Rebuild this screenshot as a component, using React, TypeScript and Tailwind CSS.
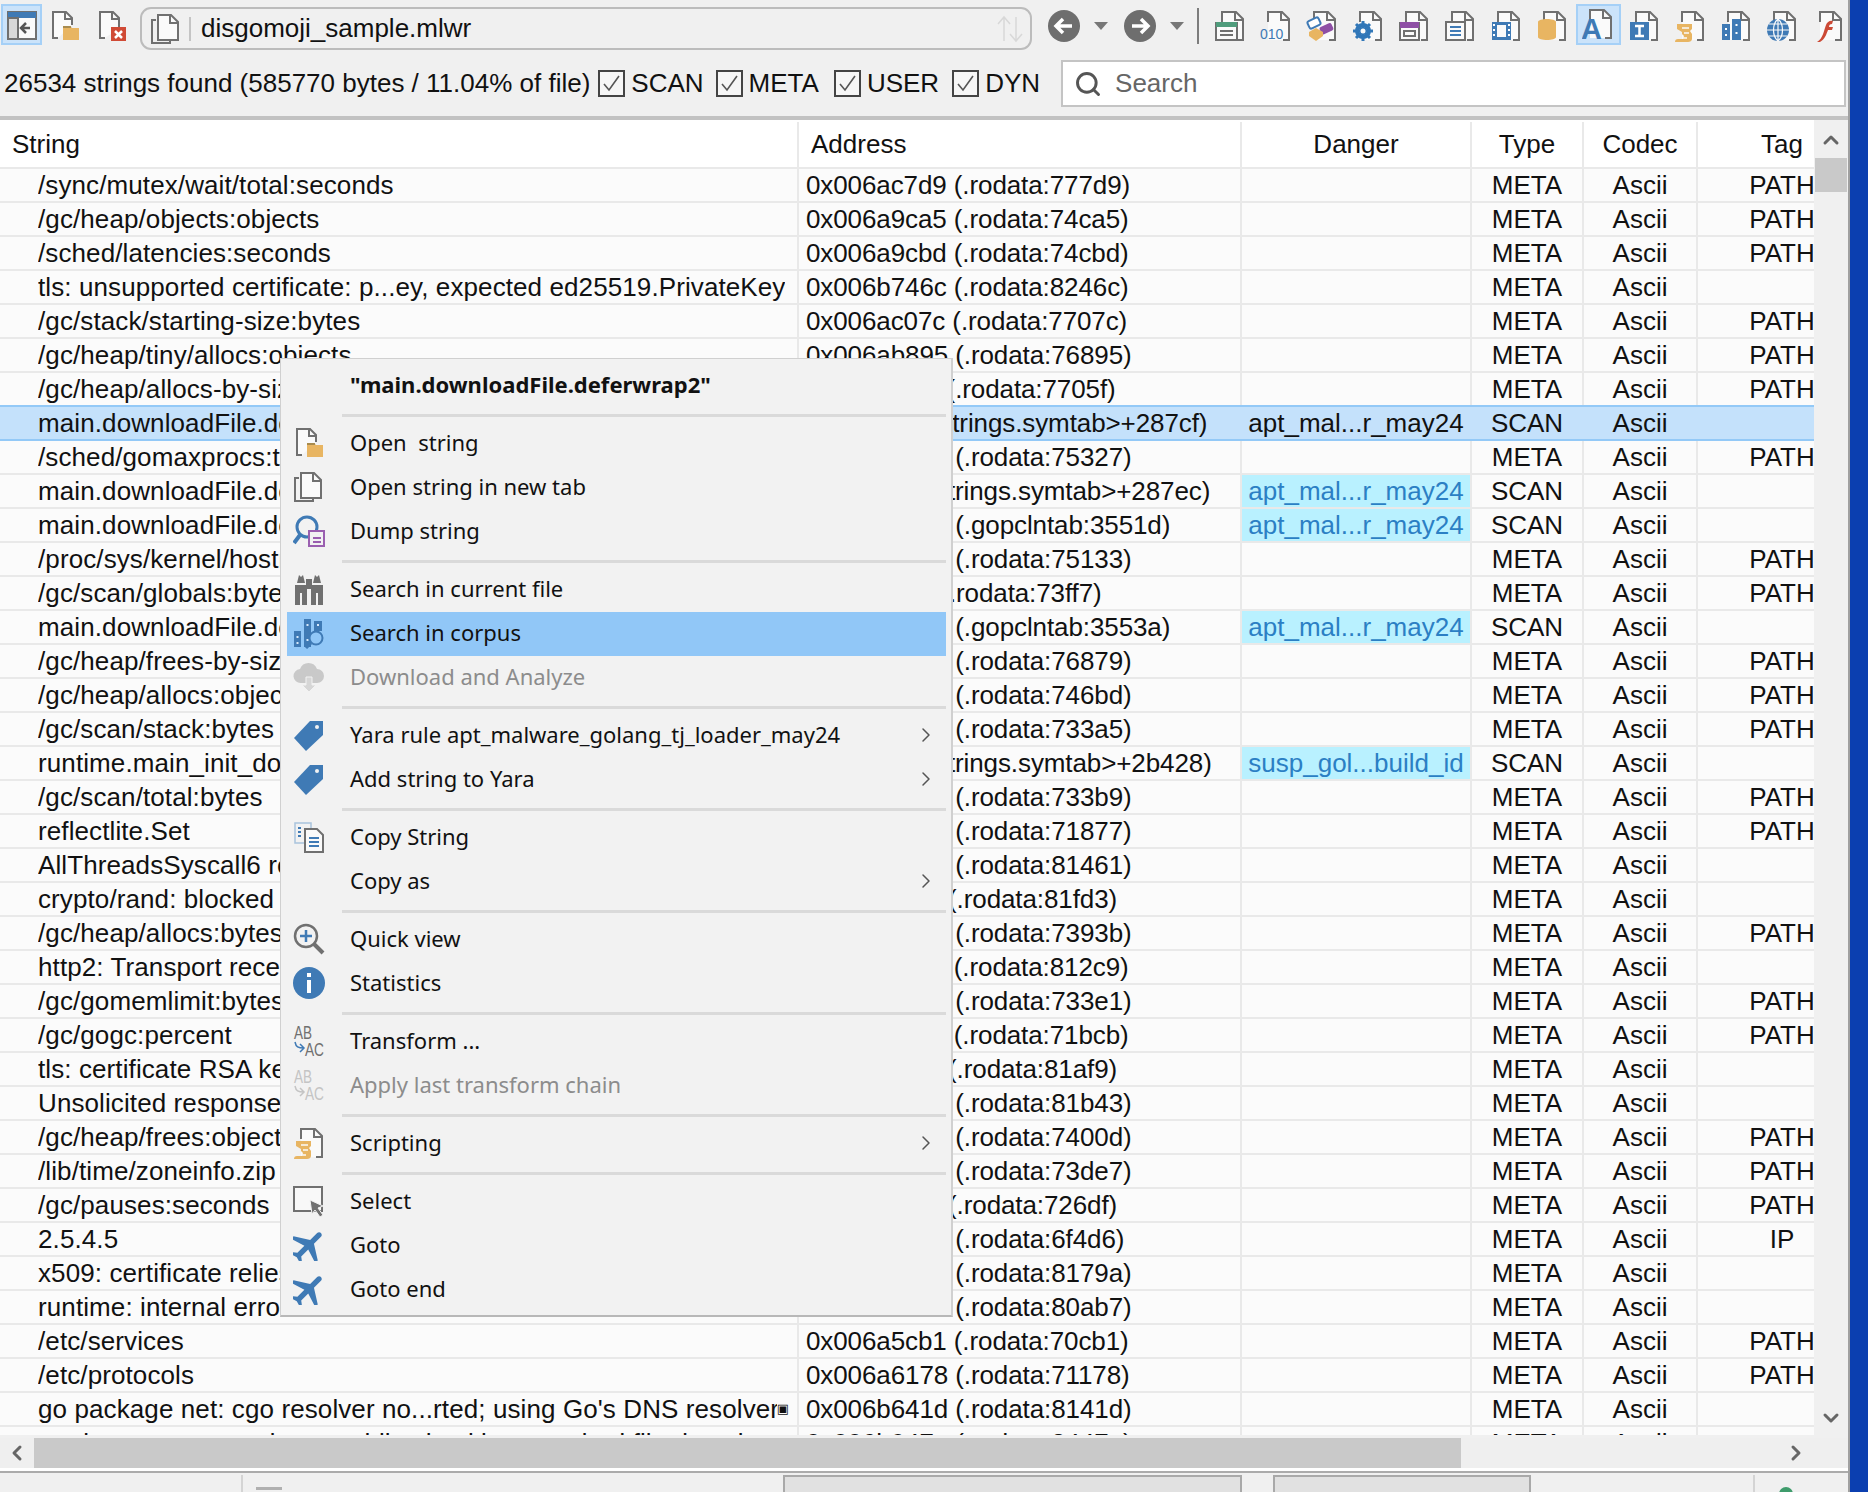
import type { ReactNode } from 'react';
import { ChevronLeft, ChevronRight, ChevronUp, ChevronDown, Search } from 'lucide-react';

const BLUE = '#3f7ab5';
const GOLD = '#e8b562';
const GRAY = '#707070';

type Row = {
  s: string;
  a: string;
  d?: string;
  hl?: boolean;
  t?: string;
  tag?: string;
  sel?: boolean;
  mark?: boolean;
};

// every .rodata offset sits at the same distance from its address
function ro(off: string) {
  const hex = (parseInt(off, 16) + 0x635000).toString(16);
  return `0x00${hex} (.rodata:${off})`;
}

function meta(s: string, off: string, tag?: string): Row {
  return { s, a: ro(off), t: 'META', tag };
}

const rows: Row[] = [
  meta('/sync/mutex/wait/total:seconds', '777d9', 'PATH'),
  meta('/gc/heap/objects:objects', '74ca5', 'PATH'),
  meta('/sched/latencies:seconds', '74cbd', 'PATH'),
  meta('tls: unsupported certificate: p...ey, expected ed25519.PrivateKey', '8246c'),
  meta('/gc/stack/starting-size:bytes', '7707c', 'PATH'),
  meta('/gc/heap/tiny/allocs:objects', '76895', 'PATH'),
  meta('/gc/heap/allocs-by-size:bytes', '7705f', 'PATH'),
  { s: 'main.downloadFile.deferwrap2', a: '0x0087cc (.strings.symtab>+287cf)', d: 'apt_mal...r_may24', t: 'SCAN', sel: true },
  meta('/sched/gomaxprocs:threads', '75327', 'PATH'),
  { s: 'main.downloadFile.deferwrap1', a: '0x0087ef (.strings.symtab>+287ec)', d: 'apt_mal...r_may24', hl: true, t: 'SCAN' },
  { s: 'main.downloadFile.deferwrap2', a: '0x0043551d (.gopclntab:3551d)', d: 'apt_mal...r_may24', hl: true, t: 'SCAN' },
  meta('/proc/sys/kernel/hostname', '75133', 'PATH'),
  meta('/gc/scan/globals:bytes', '73ff7', 'PATH'),
  { s: 'main.downloadFile.deferwrap1', a: '0x0043553a (.gopclntab:3553a)', d: 'apt_mal...r_may24', hl: true, t: 'SCAN' },
  meta('/gc/heap/frees-by-size:bytes', '76879', 'PATH'),
  meta('/gc/heap/allocs:objects', '746bd', 'PATH'),
  meta('/gc/scan/stack:bytes', '733a5', 'PATH'),
  { s: 'runtime.main_init_done', a: '0x00b42f (.strings.symtab>+2b428)', d: 'susp_gol...build_id', hl: true, t: 'SCAN' },
  meta('/gc/scan/total:bytes', '733b9', 'PATH'),
  meta('reflectlite.Set', '71877', 'PATH'),
  meta('AllThreadsSyscall6 returned', '81461'),
  meta('crypto/rand: blocked for', '81fd3'),
  meta('/gc/heap/allocs:bytes', '7393b', 'PATH'),
  meta('http2: Transport received', '812c9'),
  meta('/gc/gomemlimit:bytes', '733e1', 'PATH'),
  meta('/gc/gogc:percent', '71bcb', 'PATH'),
  meta('tls: certificate RSA key', '81af9'),
  meta('Unsolicited response received', '81b43'),
  meta('/gc/heap/frees:objects', '7400d', 'PATH'),
  meta('/lib/time/zoneinfo.zip', '73de7', 'PATH'),
  meta('/gc/pauses:seconds', '726df', 'PATH'),
  meta('2.5.4.5', '6f4d6', 'IP'),
  meta('x509: certificate relies on', '8179a'),
  meta('runtime: internal error', '80ab7'),
  meta('/etc/services', '70cb1', 'PATH'),
  meta('/etc/protocols', '71178', 'PATH'),
  { ...meta("go package net: cgo resolver no...rted; using Go's DNS resolver", '8141d'), mark: true },
  meta('runtime: unexpected error while checking standard file descriptors', '8447a'),
];

function Icon({ children, className = '' }: { children: ReactNode; className?: string }) {
  return (
    <svg viewBox="0 0 32 32" className={`w-8 h-8 shrink-0 ${className}`}>
      {children}
    </svg>
  );
}

// page outline shared by most toolbar icons
function Page({ children }: { children?: ReactNode }) {
  return (
    <Icon>
      <path d="M8 12V2h14l7 7v21h-6" fill="#fafafa" stroke={GRAY} strokeWidth="2" />
      <path d="M8 12v18h15V10h6" fill="#fafafa" />
      <path d="M21 2v8h8" fill="none" stroke={GRAY} strokeWidth="2" />
      <path d="M23 30h6" stroke={GRAY} strokeWidth="2" />
      {children}
    </Icon>
  );
}

function OpenIcon() {
  return (
    <Icon>
      <path d="M9 28H4V2h13l6 6v7" fill="#fafafa" stroke={GRAY} strokeWidth="2" />
      <path d="M16 2v7h7" fill="none" stroke={GRAY} strokeWidth="2" />
      <path d="M14 16h7l2 2h7v12H14z" fill={GOLD} />
      <path d="M14 16h8v2h-8z" fill="#a88b4e" />
    </Icon>
  );
}

function CloseIcon() {
  return (
    <Icon>
      <path d="M9 28H4V2h13l6 6v10" fill="#fafafa" stroke={GRAY} strokeWidth="2" />
      <path d="M16 2v7h7" fill="none" stroke={GRAY} strokeWidth="2" />
      <rect x="15" y="17" width="15" height="14" fill="#d04a35" />
      <path d="M19 21l7 7M26 21l-7 7" stroke="#fff" strokeWidth="2.5" />
    </Icon>
  );
}

function TabsIcon() {
  return (
    <Icon>
      <path d="M6 7H2v23h18v-3" fill="none" stroke={GRAY} strokeWidth="2" />
      <path d="M8 2h13l7 7v18H8z" fill="#fafafa" stroke={GRAY} strokeWidth="2" />
      <path d="M20 2v8h8" fill="none" stroke={GRAY} strokeWidth="2" />
    </Icon>
  );
}

function PanelIcon() {
  return (
    <Icon>
      <rect x="2" y="3" width="28" height="27" fill="#fafafa" stroke={GRAY} strokeWidth="2" />
      <rect x="2" y="3" width="28" height="6" fill={BLUE} />
      <rect x="2" y="9" width="10" height="21" fill="#d8d8d8" stroke={GRAY} strokeWidth="2" />
      <path d="M24 19H15M20 14l-5 5 5 5" fill="none" stroke="#555" strokeWidth="2.5" />
    </Icon>
  );
}

function PlaneIcon() {
  return (
    <Icon>
      <g transform="rotate(45 16 16) translate(-4.7 -4.5) scale(1.8)">
        <path
          d="M21 16v-2l-8-5V3.5c0-.83-.67-1.5-1.5-1.5S10 2.67 10 3.5V9l-8 5v2l8-2.5V19l-2 1.5V22l3.5-1 3.5 1v-1.5L13 19v-5.5l8 2.5z"
          fill={BLUE}
        />
      </g>
    </Icon>
  );
}

function TagIcon() {
  return (
    <Icon>
      <path d="M30 2v14L13 32 1 19 17 2z" fill={BLUE} />
      <circle cx="24" cy="8" r="2" fill="#f2f2f2" />
    </Icon>
  );
}

function AbIcon({ faded }: { faded?: boolean }) {
  const c = faded ? '#c4c4c4' : GRAY;
  const arrow = faded ? '#c4c4c4' : BLUE;
  return (
    <Icon>
      <text x="1" y="14" fontSize="18" fontFamily="Liberation Sans, sans-serif" textLength="18" lengthAdjust="spacingAndGlyphs" fill={c}>
        AB
      </text>
      <path d="M2 17c1 5 3 6 9 6M7 19l4 4-4 4" fill="none" stroke={arrow} strokeWidth="1.5" />
      <text x="12" y="31" fontSize="18" fontFamily="Liberation Sans, sans-serif" textLength="19" lengthAdjust="spacingAndGlyphs" fill={c}>
        AC
      </text>
    </Icon>
  );
}

function ScrollIcon() {
  return (
    <>
      <path d="M3 14h15v5l-2 2 2 3v5c0 2-2 3-4 3H1c0-2 1-3 3-3h5l1-3-2-2v-2l-5-3z" fill={GOLD} />
      <path d="M8 18h7M10 23h5M8 28h5" stroke="#fafafa" strokeWidth="1.5" />
    </>
  );
}

const menuIcons: Record<string, ReactNode> = {
  open: <OpenIcon />,
  tabs: <TabsIcon />,
  dump: (
    <Icon>
      <circle cx="14" cy="12" r="10" fill="none" stroke={BLUE} strokeWidth="3" />
      <path d="M7 20L1 28" stroke={BLUE} strokeWidth="4" />
      <rect x="16" y="16" width="15" height="15" fill="#f2f2f2" stroke="#9a5fb0" strokeWidth="2" />
      <path d="M20 23h8M20 27h8" stroke="#9a5fb0" strokeWidth="2" />
    </Icon>
  ),
  binoc: (
    <Icon>
      <path d="M4 10l2-8 2 2 2-2 2 8zM20 10l2-8 2 2 2-2 2 8z" fill={GRAY} />
      <path d="M2 12h12v20H9V20H7v12H2zM18 12h12v20h-5V20h-2v12h-5z" fill={GRAY} />
      <rect x="13" y="6" width="6" height="10" fill={GRAY} />
    </Icon>
  ),
  corpus: (
    <Icon>
      <rect x="1" y="14" width="7" height="16" fill={BLUE} />
      <rect x="11" y="2" width="7" height="28" fill={BLUE} />
      <rect x="21" y="4" width="8" height="10" fill={BLUE} />
      <path d="M4.5 19v2M4.5 25v2M14.5 7v2M14.5 22v2M25 7v2" stroke="#d6e8fa" strokeWidth="2" />
      <circle cx="23" cy="21" r="6.5" fill="#91c7f7" stroke={BLUE} strokeWidth="2" />
      <path d="M18 26l-5 5" stroke={BLUE} strokeWidth="3" />
    </Icon>
  ),
  cloud: (
    <Icon>
      <path d="M8 22a7 7 0 0 1-1-14 9 9 0 0 1 17 0 7 7 0 0 1 0 14z" fill="#c9c9c9" />
      <path d="M13 16h6v8h4l-7 7-7-7h4z" fill="#d6d6d6" stroke="#f2f2f2" strokeWidth="1" />
    </Icon>
  ),
  tag: <TagIcon />,
  copy: (
    <Icon>
      <path d="M2 2h16v20H2z" fill="#f2f2f2" stroke="#a9c4dd" strokeWidth="1.5" />
      <path d="M5 7h3M5 11h3M5 15h3" stroke={BLUE} strokeWidth="2" />
      <path d="M12 8h12l6 6v17H12z" fill="#fafafa" stroke={GRAY} strokeWidth="2" />
      <path d="M16 17h10M16 21h10M16 25h10" stroke={BLUE} strokeWidth="2" />
    </Icon>
  ),
  quick: (
    <Icon>
      <circle cx="13" cy="13" r="11" fill="none" stroke={GRAY} strokeWidth="2.5" />
      <path d="M21 21l9 9" stroke={GRAY} strokeWidth="4" />
      <path d="M13 7v12M7 13h12" stroke={BLUE} strokeWidth="2.5" />
    </Icon>
  ),
  info: (
    <Icon>
      <circle cx="16" cy="16" r="16" fill={BLUE} />
      <rect x="14" y="13" width="4" height="13" fill="#fff" />
      <rect x="14" y="6" width="4" height="4" fill="#fff" />
    </Icon>
  ),
  ab: <AbIcon />,
  abFaded: <AbIcon faded />,
  script: (
    <Page>
      <ScrollIcon />
    </Page>
  ),
  select: (
    <Icon>
      <rect x="1" y="2" width="28" height="24" fill="#f8f8f8" stroke={GRAY} strokeWidth="2" />
      <path d="M17 15l13 6-5 2 5 7-3 2-5-7-3 4z" fill={GRAY} stroke="#f2f2f2" strokeWidth="1" />
    </Icon>
  ),
  plane: <PlaneIcon />,
};

type MenuEntry =
  | 'sep'
  | { label: string; icon?: string; bold?: boolean; off?: boolean; sub?: boolean; active?: boolean };

const menu: MenuEntry[] = [
  { label: '"main.downloadFile.deferwrap2"', bold: true },
  'sep',
  { label: 'Open  string', icon: 'open' },
  { label: 'Open string in new tab', icon: 'tabs' },
  { label: 'Dump string', icon: 'dump' },
  'sep',
  { label: 'Search in current file', icon: 'binoc' },
  { label: 'Search in corpus', icon: 'corpus', active: true },
  { label: 'Download and Analyze', icon: 'cloud', off: true },
  'sep',
  { label: 'Yara rule apt_malware_golang_tj_loader_may24', icon: 'tag', sub: true },
  { label: 'Add string to Yara', icon: 'tag', sub: true },
  'sep',
  { label: 'Copy String', icon: 'copy' },
  { label: 'Copy as', sub: true },
  'sep',
  { label: 'Quick view', icon: 'quick' },
  { label: 'Statistics', icon: 'info' },
  'sep',
  { label: 'Transform ...', icon: 'ab' },
  { label: 'Apply last transform chain', icon: 'abFaded', off: true },
  'sep',
  { label: 'Scripting', icon: 'script', sub: true },
  'sep',
  { label: 'Select', icon: 'select' },
  { label: 'Goto', icon: 'plane' },
  { label: 'Goto end', icon: 'plane' },
];

function ContextMenu() {
  return (
    <div className="absolute left-[280px] top-[358px] w-[673px] h-[959px] pt-[5px] pl-[6px] pr-[5px] bg-[#f2f2f2] border border-[#d0d0d0] border-b-2 border-b-[#b8b8b8] border-r-2 font-['Noto_Sans',sans-serif] text-[22px] text-[#111]">
      {menu.map((m, i) =>
        m === 'sep' ? (
          <div key={i} className="h-[14px] ml-[55px] flex items-center">
            <div className="h-[3px] w-full bg-[#dadada]" />
          </div>
        ) : (
          <div key={i} className={`h-[44px] pb-[3px] flex items-center ${m.active ? 'bg-[#91c7f7]' : ''}`}>
            <div className="w-[63px] pl-[6px] shrink-0">{m.icon ? menuIcons[m.icon] : null}</div>
            <span className={`flex-1 whitespace-pre ${m.bold ? 'font-bold' : ''} ${m.off ? 'text-[#8c8c8c]' : ''}`}>
              {m.label}
            </span>
            {m.sub ? <ChevronRight className="w-6 h-6 mr-[8px] text-[#555]" strokeWidth={1.5} /> : null}
          </div>
        )
      )}
    </div>
  );
}

function Check({ label, className = '' }: { label: string; className?: string }) {
  return (
    <div className={`flex items-center shrink-0 ${className}`}>
      <svg viewBox="0 0 27 27" className="w-[27px] h-[27px] shrink-0">
        <rect x="1" y="1" width="25" height="25" fill="#f6f6f6" stroke="#444" strokeWidth="2" />
        <path d="M6 14l5 6L21 6" fill="none" stroke="#555" strokeWidth="1.6" />
      </svg>
      <span className="ml-[6px]">{label}</span>
    </div>
  );
}

function NavButton({ dir }: { dir: 'back' | 'fwd' }) {
  return (
    <>
      <svg viewBox="0 0 32 32" className="w-8 h-8 shrink-0">
        <circle cx="16" cy="16" r="16" fill="#6e6e6e" />
        {dir === 'back' ? (
          <path d="M24 16H9M15 9l-7 7 7 7" fill="none" stroke="#fff" strokeWidth="3.5" />
        ) : (
          <path d="M8 16h15M17 9l7 7-7 7" fill="none" stroke="#fff" strokeWidth="3.5" />
        )}
      </svg>
      <svg viewBox="0 0 14 8" className="w-[14px] h-2 ml-[14px] mr-[16px] shrink-0">
        <path d="M0 0h14L7 8z" fill="#777" />
      </svg>
    </>
  );
}

function Toolbar() {
  return (
    <div className="h-[58px] flex items-start pt-[4px]">
      <div className="ml-[1px] w-[41px] h-[41px] bg-[#cbe3fa] border-2 border-[#a5d0f7] flex items-center justify-center">
        <PanelIcon />
      </div>
      <div className="ml-[7px] w-8 mt-[6px]">
        <OpenIcon />
      </div>
      <div className="ml-[15px] w-8 mt-[6px]">
        <CloseIcon />
      </div>
      <div className="ml-[12px] mt-[3px] w-[892px] h-[43px] rounded-[11px] border-2 border-[#bcbcbc] flex items-center pl-[8px]">
        <TabsIcon />
        <div className="ml-[7px] w-[2px] h-[24px] bg-[#c4c4c4]" />
        <span className="ml-[10px]">disgomoji_sample.mlwr</span>
        <svg viewBox="0 0 32 32" className="w-8 h-8 ml-auto mr-[4px]">
          <path d="M10 28V5M4 11l6-7 6 7M22 4v24M16 21l6 7 6-7" fill="none" stroke="#d8d8d8" strokeWidth="1.5" />
        </svg>
      </div>
      <div className="ml-[16px] mt-[6px] flex items-center h-8">
        <NavButton dir="back" />
        <NavButton dir="fwd" />
        <div className="w-[2px] h-[36px] bg-[#7d7d7d] mr-[15px] -ml-[3px]" />
        <div className="flex items-center gap-[14px]">
          <Page>
            <rect x="2" y="13" width="21" height="17" fill="#fafafa" stroke={GRAY} strokeWidth="2" />
            <rect x="2" y="12" width="21" height="5" fill="#4f9c7c" />
            <path d="M6 21h13M6 25h13" stroke={GRAY} strokeWidth="2" />
          </Page>
          <Page>
            <text x="0" y="29" fontSize="14" fontFamily="Liberation Sans, sans-serif" fill={BLUE}>
              010
            </text>
          </Page>
          <Page>
            <rect x="2" y="9" width="12" height="8" rx="2" transform="rotate(-25 8 13)" fill="#fff" stroke={BLUE} strokeWidth="2" />
            <rect x="14" y="15" width="13" height="8" rx="2" transform="rotate(-25 20 19)" fill="#8e4fa5" />
            <path d="M3 22l7-4 7 4v4l-7 5-7-5z" fill={GOLD} />
          </Page>
          <Page>
            <circle cx="11" cy="21" r="6" fill="none" stroke="#3177b8" strokeWidth="4" />
            <path d="M11 11v20M1 21h20M4 14l14 14M18 14L4 28" stroke="#3177b8" strokeWidth="3" />
            <circle cx="11" cy="21" r="2.5" fill="#fafafa" />
          </Page>
          <Page>
            <rect x="2" y="13" width="19" height="17" fill="#fafafa" stroke={GRAY} strokeWidth="2" />
            <rect x="2" y="12" width="19" height="6" fill="#8e4fa5" />
            <rect x="6" y="21" width="11" height="5" fill="none" stroke={GRAY} strokeWidth="2" />
          </Page>
          <Page>
            <rect x="2" y="12" width="19" height="18" fill="#fafafa" stroke={GRAY} strokeWidth="2" />
            <path d="M6 17h11M6 21h11M6 25h11" stroke={BLUE} strokeWidth="2" />
          </Page>
          <Page>
            <rect x="2" y="12" width="19" height="18" fill={BLUE} />
            <rect x="7" y="15" width="9" height="12" fill="#fafafa" />
            <path d="M4 14v2M4 19v2M4 24v2M19 14v2M19 19v2M19 24v2" stroke="#fff" strokeWidth="2" />
          </Page>
          <Page>
            <path d="M2 12c0-4 18-4 18 0v15c0 4-18 4-18 0z" fill={GOLD} />
          </Page>
          <div className="w-[45px] h-[41px] -mx-[6.5px] -mt-[4px] flex items-center justify-center bg-[#cbe3fa] border-2 border-[#a5d0f7]">
            <Page>
              <text x="-1" y="31" fontSize="29" fontFamily="Liberation Sans, sans-serif" fontWeight="700" fill={BLUE}>
                A
              </text>
            </Page>
          </div>
          <Page>
            <rect x="2" y="12" width="19" height="18" fill={BLUE} />
            <path d="M7 16h9M7 26h9M11.5 16v10" stroke="#fff" strokeWidth="2.5" />
          </Page>
          <Page>
            <ScrollIcon />
          </Page>
          <Page>
            <rect x="2" y="14" width="8" height="16" fill={BLUE} />
            <rect x="12" y="9" width="9" height="21" fill={BLUE} />
            <path d="M6 18v2M6 24v2M16.5 14v2M16.5 22v2" stroke="#fff" strokeWidth="2" />
          </Page>
          <Page>
            <circle cx="12" cy="20" r="11" fill={BLUE} />
            <path d="M1 20h22M12 9v22M3 14h18M3 26h18M12 9c-6 5-6 17 0 22M12 9c6 5 6 17 0 22" fill="none" stroke="#fafafa" strokeWidth="1.2" />
          </Page>
          <Page>
            <path d="M5 32c6-3 7-12 9-17 1-3 4-5 7-4l-1 3c-2 0-3 1-3 3h4l-1 3h-4c-2 5-3 10-10 13z" fill="#cc4b37" />
          </Page>
        </div>
      </div>
    </div>
  );
}

function FilterBar() {
  return (
    <div className="h-[58px] pb-[7px] flex items-center pl-[4px]">
      <span className="whitespace-nowrap shrink-0">26534 strings found (585770 bytes / 11.04% of file)</span>
      <Check label="SCAN" className="ml-[8px]" />
      <Check label="META" className="ml-[12px]" />
      <Check label="USER" className="ml-[15px]" />
      <Check label="DYN" className="ml-[13px]" />
      <div className="ml-[21px] w-[785px] h-[47px] shrink-0 bg-white border-2 border-[#c4c4c4] flex items-center pl-[11px] text-[#666]">
        <Search className="w-[28px] h-[28px] text-[#555]" strokeWidth={2.5} />
        <span className="ml-[13px]">Search</span>
      </div>
    </div>
  );
}

function TableRow({ r }: { r: Row }) {
  const sep = r.sel ? 'border-transparent' : 'border-[#e9e9e9]';
  return (
    <div
      className={`flex items-center border-t-2 ${
        r.sel
          ? 'h-[36px] -mb-[2px] relative bg-[#c4e1fb] border-[#93c9f7] border-b-2'
          : 'h-[34px] border-[#e9e9e9]'
      }`}
    >
      <div className={`w-[799px] h-full shrink-0 pl-[38px] pr-[8px] flex items-center border-r-2 ${sep}`}>
        <span className="overflow-hidden whitespace-nowrap tracking-[0.1px]">{r.s}</span>
        {r.mark ? <span className="shrink-0 text-[13px] font-['DejaVu_Sans',sans-serif]">▣</span> : null}
      </div>
      <div className={`w-[443px] h-full shrink-0 pl-[7px] flex items-center border-r-2 ${sep}`}>
        <span className="whitespace-nowrap tracking-[-0.1px]">{r.a}</span>
      </div>
      <div
        className={`w-[230px] h-full shrink-0 flex items-center justify-center border-r-2 ${sep} ${
          r.hl ? 'bg-[#b9f1ff] text-[#2b7fc4]' : ''
        }`}
      >
        {r.d}
      </div>
      <div className={`w-[112px] h-full shrink-0 flex items-center justify-center border-r-2 ${sep}`}>{r.t}</div>
      <div className={`w-[114px] h-full shrink-0 flex items-center justify-center border-r-2 ${sep}`}>Ascii</div>
      <div className="w-[168px] h-full shrink-0 flex items-center justify-center">{r.tag}</div>
    </div>
  );
}

function Table() {
  return (
    <div className="w-[1814px] h-[1315px] overflow-hidden bg-[#fbfbfb]">
      <div className="h-[47px] w-[1866px] pt-[2px] flex items-center bg-white">
        <div className="w-[799px] h-full pl-[12px] flex items-center border-r-2 border-[#e9e9e9]">String</div>
        <div className="w-[443px] h-full pl-[12px] flex items-center border-r-2 border-[#e9e9e9]">Address</div>
        <div className="w-[230px] h-full flex items-center justify-center border-r-2 border-[#e9e9e9]">Danger</div>
        <div className="w-[112px] h-full flex items-center justify-center border-r-2 border-[#e9e9e9]">Type</div>
        <div className="w-[114px] h-full flex items-center justify-center border-r-2 border-[#e9e9e9]">Codec</div>
        <div className="w-[168px] h-full flex items-center justify-center">Tag</div>
      </div>
      <div className="w-[1866px]">
        {rows.map((r, i) => (
          <TableRow key={i} r={r} />
        ))}
      </div>
    </div>
  );
}

function StatusBar() {
  return (
    <div className="flex-1 flex items-start pt-[2px] overflow-hidden text-[20px] text-[#8a8a8a]">
      <div className="w-[243px] h-[20px] border-r-2 border-[#d4d4d4]" />
      <div className="ml-[13px] mt-[12px] w-[26px] h-[3px] bg-[#b0b0b0]" />
      <div className="ml-[501px] w-[459px] h-[40px] bg-[#e1e1e1] border-2 border-[#a9a9a9] pl-[10px] pt-[8px]">ELF</div>
      <div className="ml-[31px] w-[258px] h-[40px] bg-[#e1e1e1] border-2 border-[#a9a9a9] text-center pt-[8px]">124</div>
      <div className="ml-[222px] w-[2px] h-[20px] bg-[#d4d4d4]" />
      <div className="ml-[24px] mt-[12px] w-[14px] h-[14px] rounded-full bg-[#3f9c6c]" />
    </div>
  );
}

export default function App() {
  return (
    <div className="relative w-[1868px] h-[1492px] flex overflow-hidden bg-[#0b3fb0] font-['Liberation_Sans',sans-serif] text-[26px] text-[#111]">
      <div className="w-[1850px] h-full flex flex-col bg-[#f0f0f0] border-r-2 border-[#a0a0a0]">
        <Toolbar />
        <FilterBar />
        <div className="h-[4px] bg-[#c2c2c2] shrink-0" />
        <div className="flex pt-0">
          <Table />
          <div className="relative flex-1 flex flex-col items-center">
            <ChevronUp className="mt-[8px] w-6 h-6 text-[#666]" strokeWidth={3} />
            <div className="mt-[6px] w-[32px] h-[34px] bg-[#c9c9c9]" />
            <ChevronDown className="mt-auto mb-[5px] w-6 h-6 text-[#666]" strokeWidth={3} />
          </div>
        </div>
        <div className="mt-[3px] h-[30px] flex items-center bg-[#efefef] shrink-0">
          <ChevronLeft className="ml-[5px] w-6 h-6 text-[#666]" strokeWidth={3} />
          <div className="ml-[5px] w-[1427px] h-full bg-[#c9c9c9]" />
          <ChevronRight className="ml-auto mr-[40px] w-6 h-6 text-[#666]" strokeWidth={3} />
        </div>
        <div className="h-[5px] border-b-2 border-[#ababab] bg-white shrink-0" />
        <StatusBar />
      </div>
      <ContextMenu />
    </div>
  );
}
